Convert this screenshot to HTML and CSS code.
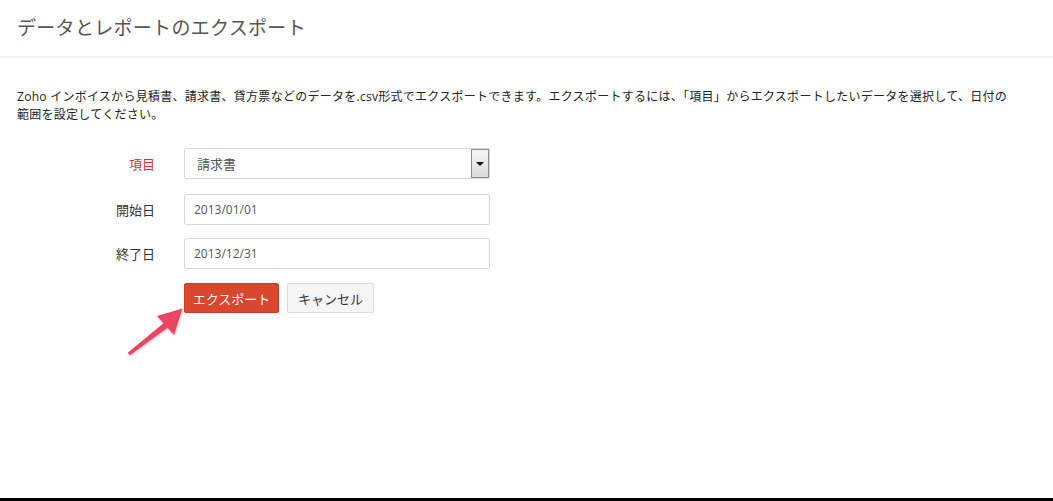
FILE: index.html
```html
<!DOCTYPE html>
<html lang="ja">
<head>
<meta charset="utf-8">
<title>データとレポートのエクスポート</title>
<link rel="stylesheet" href="styles.css">
</head>
<body>
<div class="page">
  <header class="header">
    <h1 class="title">データとレポートのエクスポート</h1>
  </header>
  <main class="content">
    <p class="intro">Zoho インボイスから見積書、請求書、貸方票などのデータを.csv形式でエクスポートできます。エクスポートするには、「項目」からエクスポートしたいデータを選択して、日付の範囲を設定してください。</p>
    <form class="form">
      <div class="row">
        <label class="label label-required">項目</label>
        <div class="select">
          <span class="select-value">請求書</span>
          <span class="select-btn"><span class="caret"></span></span>
        </div>
      </div>
      <div class="row row-gap1">
        <label class="label">開始日</label>
        <div class="input">2013/01/01</div>
      </div>
      <div class="row row-gap2">
        <label class="label">終了日</label>
        <div class="input">2013/12/31</div>
      </div>
      <div class="row row-gap3">
        <span class="label"></span>
        <div class="actions">
          <button type="button" class="btn btn-primary">エクスポート</button>
          <button type="button" class="btn btn-default">キャンセル</button>
        </div>
      </div>
    </form>
  </main>
  <svg class="pointer" width="1053" height="501" viewBox="0 0 1053 501">
    <defs>
      <filter id="sh" x="-20%" y="-20%" width="140%" height="140%">
        <feDropShadow dx="0.5" dy="1" stdDeviation="0.8" flood-color="#000" flood-opacity="0.25"/>
      </filter>
    </defs>
    <polygon filter="url(#sh)" fill="#ea4463" points="127.8,352.8 163.5,323.3 157,316 182.5,308.5 174,335 167.5,327.7 129.8,355.2"/>
  </svg>
  <div class="bottom-bar"></div>
</div>
</body>
</html>
```

FILE: styles.css
```css
* { box-sizing: border-box; }
html, body {
  margin: 0;
  padding: 0;
  background: #fff;
}
body {
  font-family: "Open Sans", "Noto Sans CJK JP", sans-serif;
  color: #333;
}
.page {
  position: relative;
  width: 1053px;
  height: 501px;
  overflow: hidden;
  display: flex;
  flex-direction: column;
}
.header {
  height: 58px;
  border-bottom: 2px solid #f1f1f1;
  padding: 0 17px;
  display: flex;
  align-items: center;
}
.title {
  margin: 0 0 4px 0;
  font-family: "Noto Sans CJK JP", sans-serif;
  font-weight: 400;
  font-size: 19px;
  color: #555;
  letter-spacing: 0.3px;
}
.content {
  flex: 1;
  padding: 0 17px;
}
.intro {
  margin: 30px 0 0 0;
  width: 1000px;
  font-family: "Open Sans", "Noto Sans CJK JP", sans-serif;
  font-size: 12px;
  line-height: 18px;
  color: #222;
  letter-spacing: 0.27px;
}
.form {
  margin-top: 24px;
}
.row {
  display: flex;
  align-items: center;
}
.row-gap1 { margin-top: 15px; }
.row-gap2 { margin-top: 13px; }
.row-gap3 { margin-top: 14px; }
.label {
  width: 138px;
  margin-right: 29px;
  text-align: right;
  font-family: "Noto Sans CJK JP", sans-serif;
  font-size: 13px;
  color: #333;
}
.label-required { color: #c8363a; }
.select, .input {
  width: 306px;
  height: 31px;
  border: 1px solid #d9d9d9;
  border-radius: 2px;
  background: #fff;
  font-size: 12.5px;
  color: #555;
  display: flex;
  align-items: center;
}
.select {
  padding-left: 12px;
  justify-content: space-between;
}
.select-value {
  font-family: "Noto Sans CJK JP", sans-serif;
  font-size: 13px;
}
.select-btn {
  width: 18px;
  height: 29px;
  border: 1px solid #8f8f8f;
  background: linear-gradient(#f6f6f6, #dcdcdc);
  display: flex;
  align-items: center;
  justify-content: center;
}
.caret {
  width: 0;
  height: 0;
  border-left: 4px solid transparent;
  border-right: 4px solid transparent;
  border-top: 4px solid #111;
}
.input {
  padding-left: 9px;
  font-family: "Open Sans", sans-serif;
  font-size: 12px;
  color: #555;
}
.actions {
  display: flex;
  gap: 8px;
}
.btn {
  height: 30px;
  border-radius: 2px;
  font-family: "Noto Sans CJK JP", sans-serif;
  font-size: 13px;
  padding: 0;
  cursor: pointer;
}
.btn-primary {
  width: 95px;
  background: #d9472f;
  border: 1px solid #c93d27;
  color: #fff;
}
.btn-default {
  width: 87px;
  background: #f5f5f5;
  border: 1px solid #dcdcdc;
  color: #333;
}
.pointer {
  position: absolute;
  left: 0;
  top: 0;
  pointer-events: none;
}
.bottom-bar {
  height: 3px;
  background: #000;
}
```
